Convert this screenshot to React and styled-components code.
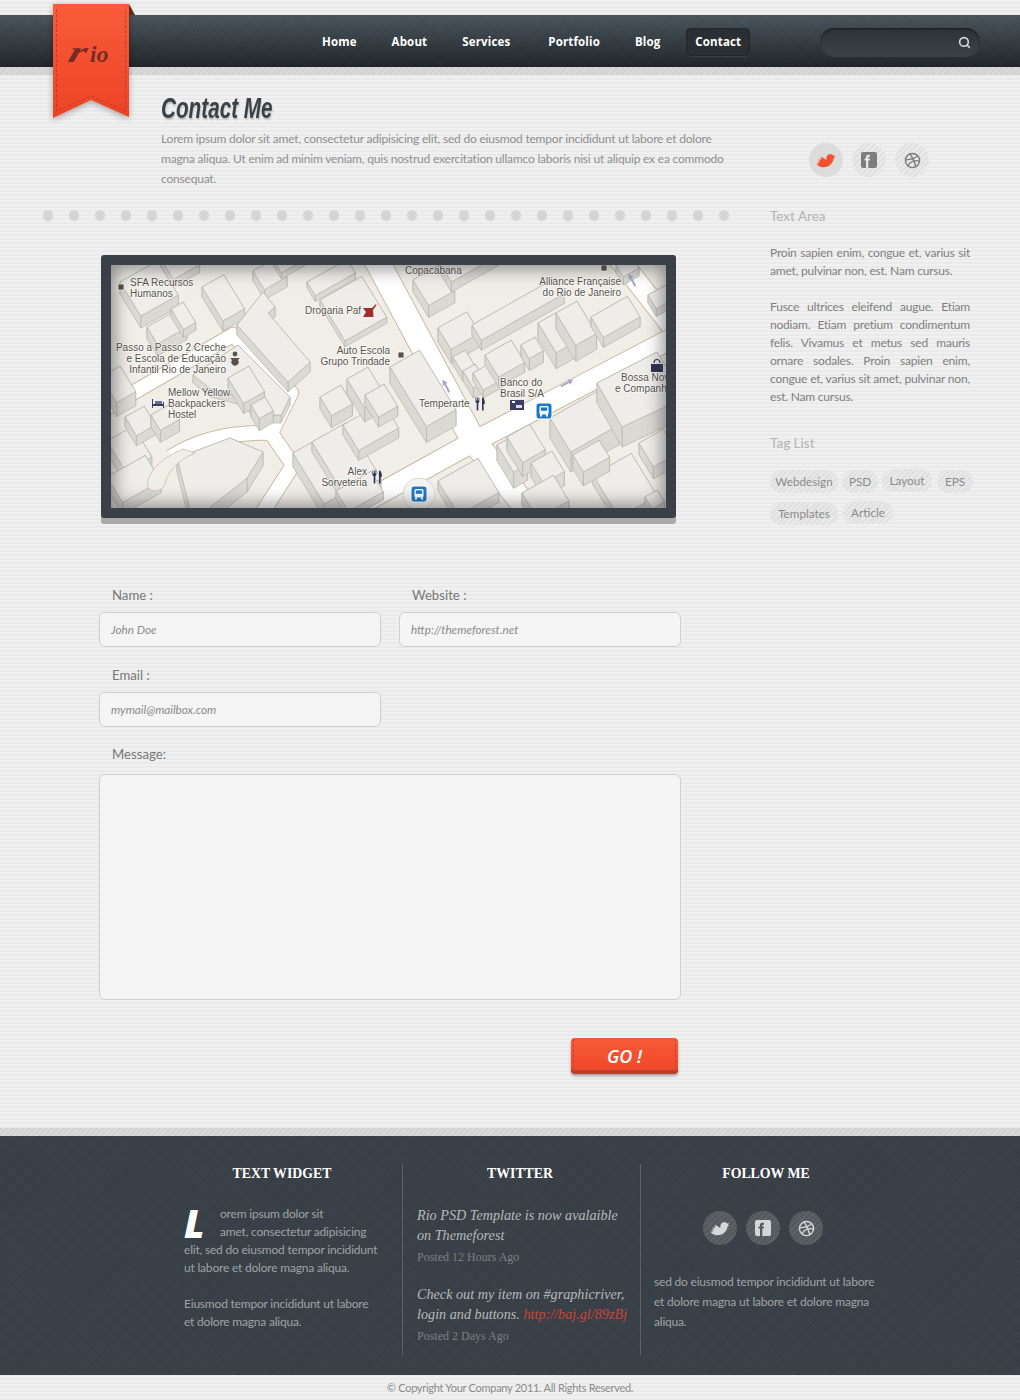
import React from 'react';
import styled, { createGlobalStyle, css } from 'styled-components';
import { FiDribbble, FiSearch } from 'react-icons/fi';

const bodyFont = `Lato, 'Open Sans', sans-serif`;
const serifFont = `'Liberation Serif', serif`;

const GlobalStyle = createGlobalStyle`
  html, body {
    margin: 0;
    padding: 0;
  }
  body {
    background-color: #eeeeee;
    background-image: repeating-linear-gradient(0deg, #eaeaea 0, #eaeaea 2px, #f0f0f0 2px, #f0f0f0 4px);
    font-family: ${bodyFont};
    color: #8c8c8c;
  }
  * { box-sizing: border-box; }
`;

const diagonal = (a, b) => css`
  background-image: repeating-linear-gradient(135deg, ${a} 0, ${a} 2px, ${b} 2px, ${b} 4px);
`;

const hatch = `
  repeating-linear-gradient(45deg, rgba(0, 0, 0, 0.05) 0, rgba(0, 0, 0, 0.05) 1px, transparent 1px, transparent 3px),
  repeating-linear-gradient(-45deg, rgba(0, 0, 0, 0.05) 0, rgba(0, 0, 0, 0.05) 1px, transparent 1px, transparent 3px)
`;

const Page = styled.div`
  width: 1020px;
  height: 1400px;
  padding-top: 15px;
  display: flex;
  flex-direction: column;
  overflow: hidden;
`;

const Header = styled.header`
  position: relative;
  height: 52px;
  flex: none;
  background: ${hatch}, linear-gradient(#4d5860, #22272b);
  display: flex;
  align-items: center;
  padding-left: 304px;
`;

const Ribbon = styled.a`
  position: absolute;
  left: 53px;
  top: -11px;
  width: 76px;
  height: 114px;
  filter: drop-shadow(0 2px 3px rgba(0, 0, 0, 0.3));
`;

const Fold = styled.div`
  position: absolute;
  left: 129px;
  top: -11px;
  width: 6px;
  height: 11px;
  background: #5e2a22;
  clip-path: polygon(0 0, 100% 100%, 0 100%);
`;

const LogoText = styled.text`
  font-family: ${serifFont};
  font-style: italic;
  font-weight: 700;
  fill: #742d24;
`;

const Nav = styled.nav`
  display: flex;
  align-items: center;
  width: 462px;
`;

const NavItem = styled.a`
  font-family: 'Open Sans', sans-serif;
  font-size: 11.5px;
  font-weight: 700;
  letter-spacing: 0.15px;
  line-height: 28px;
  height: 28px;
  margin-top: 2px;
  color: #ffffff;
  margin-left: ${p => p.$gap}px;
  ${p => p.$active && css`
    padding: 0 9px;
    background: #2a2f33;
    border-radius: 5px;
    box-shadow: inset 0 0 2px rgba(0, 0, 0, 0.6), 0 1px 0 rgba(255, 255, 255, 0.08);
  `}
`;

const Search = styled.div`
  width: 160px;
  height: 28px;
  margin-left: 54px;
  margin-top: 2px;
  border-radius: 14px;
  background: linear-gradient(#2d3236, #3b4248);
  box-shadow: inset 0 1px 2px rgba(0, 0, 0, 0.5), 0 1px 0 rgba(255, 255, 255, 0.08);
  display: flex;
  align-items: center;
  justify-content: flex-end;
  padding-right: 9px;
  color: #d6d8d9;
  font-size: 13px;
`;

const Band = styled.div`
  height: 8px;
  flex: none;
  ${diagonal('#d2d2d2', '#dadada')}
`;

const Intro = styled.section`
  display: flex;
  padding: 17px 0 0 161px;
  height: 135px;
  flex: none;
`;

const IntroText = styled.div`
  width: 648px;
`;

const Title = styled.h1`
  margin: 0;
  font-family: 'Liberation Sans', sans-serif;
  font-style: italic;
  font-weight: 700;
  font-size: 30px;
  line-height: 32px;
  color: #3a4248;
  text-shadow: 1px 2px 2px rgba(0, 0, 0, 0.18);
  transform: scaleX(0.69);
  transform-origin: left center;
`;

const Lead = styled.p`
  margin: 5px 0 0;
  font-size: 12px;
  letter-spacing: -0.2px;
  line-height: 20px;
  color: #8f8f8f;
  white-space: nowrap;
`;

const SocialRow = styled.div`
  display: flex;
  gap: ${p => p.$gap}px;
  margin-top: ${p => p.$top || 0}px;
  margin-left: ${p => p.$left || 0}px;
`;

const SocialLink = styled.a`
  width: 34px;
  height: 34px;
  border-radius: 50%;
  display: flex;
  align-items: center;
  justify-content: center;
  font-size: ${p => p.$size || 17}px;
  ${p => p.$dark
    ? css`
      color: #d4d6d7;
      ${diagonal('#55595d', '#5e6266')}
    `
    : p.$active
      ? css`
        color: #f4502f;
        background: #dcdcdc;
      `
      : css`
        color: #7d7d7d;
        ${diagonal('#e0e0e0', '#ebebeb')}
      `}
`;

const Content = styled.div`
  display: flex;
  flex: none;
  height: 918px;
`;

const LeftColumn = styled.div`
  width: 770px;
  flex: none;
`;

const Dots = styled.div`
  display: flex;
  gap: 16px;
  padding-left: 43px;
  height: 10px;
`;

const Dot = styled.span`
  width: 10px;
  height: 11px;
  flex: none;
  border-radius: 50%;
  background: #d4d5d6;
`;

const MapFrame = styled.div`
  position: relative;
  width: 575px;
  height: 263px;
  margin: 35px 0 0 101px;
  border: 10px solid #394047;
  border-radius: 3px;
  box-shadow: 0 6px 0 #a9a9a9;
  background: #f1eee8;
`;

const MapSvg = styled.svg`
  display: block;
  width: 555px;
  height: 243px;
`;

const Vignette = styled.div`
  position: absolute;
  inset: 0;
  box-shadow: inset 0 0 18px 3px rgba(40, 40, 40, 0.55);
  pointer-events: none;
`;

const MapLabel = styled.text`
  font-family: 'Liberation Sans', sans-serif;
  font-size: 10px;
  fill: #57524c;
  stroke: #ffffff;
  stroke-width: 1.6px;
  stroke-opacity: 0.7;
  paint-order: stroke;
`;

const Form = styled.form`
  width: 582px;
  margin: 68px 0 0 99px;
  display: grid;
  grid-template-columns: 282px 282px;
  column-gap: 18px;
`;

const Field = styled.div`
  grid-column: ${p => (p.$wide ? '1 / 3' : 'auto')};
  margin-bottom: ${p => p.$bottom ?? 19}px;
`;

const Label = styled.label`
  display: block;
  font-size: 13.2px;
  line-height: 18px;
  height: 18px;
  margin: 0 0 ${p => p.$gap || 8}px 13px;
  color: #777777;
`;

const Input = styled.div`
  height: 35px;
  width: 282px;
  line-height: 33px;
  padding: 0 11px;
  background: #f5f5f5;
  border: 1px solid #cfcfcf;
  border-radius: 6px;
  font-style: italic;
  font-size: 11.7px;
  color: #8a8a8a;
`;

const TextArea = styled.div`
  height: 226px;
  background: #f5f5f5;
  border: 1px solid #cfcfcf;
  border-radius: 6px;
`;

const GoButton = styled.button`
  display: block;
  position: relative;
  width: 107px;
  height: 36px;
  margin: 38px 0 0 571px;
  padding: 0;
  border: 0;
  border-radius: 4px;
  background: linear-gradient(#f85a39, #ee4727);
  box-shadow: inset 0 -4px 0 #b9402b, 0 2px 3px rgba(0, 0, 0, 0.3);
  font-family: 'Open Sans', sans-serif;
  font-style: italic;
  font-weight: 600;
  font-size: 18px;
  color: #ffffff;
  &::before,
  &::after {
    content: '';
    position: absolute;
    top: 1px;
    bottom: 1px;
    border-left: 1px dashed #bb452f;
  }
  &::before { left: 2px; }
  &::after { right: 2px; }
`;

const Sidebar = styled.aside`
  width: 200px;
  flex: none;
  margin-top: -4px;
`;

const SideTitle = styled.h3`
  margin: 0;
  font-size: 13.5px;
  font-weight: 400;
  line-height: 20px;
  color: #b4b4b4;
`;

const SideText = styled.p`
  margin: ${p => p.$top}px 0 0;
  font-size: 12px;
  letter-spacing: -0.2px;
  line-height: 18px;
  color: #7f7f7f;
  text-align: justify;
`;

const TagTitle = styled(SideTitle)`
  margin-top: 27px;
`;

const Tags = styled.div`
  display: flex;
  flex-wrap: wrap;
  width: 205px;
  margin-top: 17px;
  row-gap: 9px;
`;

const Tag = styled.a`
  height: 23px;
  line-height: 23px;
  border-radius: 12px;
  width: ${p => p.$w}px;
  margin-right: ${p => p.$gap}px;
  margin-top: ${p => (p.$lift ? -1 : 0)}px;
  margin-bottom: ${p => (p.$lift ? 1 : 0)}px;
  text-align: center;
  font-size: 11.7px;
  color: #8b8b8b;
  ${diagonal('#e0e0e0', '#e9e9e9')}
`;

const BottomBand = styled(Band)`
  margin-top: auto;
`;

const Footer = styled.footer`
  height: 239px;
  flex: none;
  background: ${hatch}, #3b4249;
  display: flex;
  padding: 28px 0 0 184px;
`;

const FooterCol = styled.div`
  width: ${p => p.$w}px;
  height: 191px;
  flex: none;
  padding-right: ${p => p.$pad}px;
  margin-right: ${p => p.$margin}px;
  border-right: ${p => (p.$line ? '1px solid #5b6268' : '0')};
`;

const FooterTitle = styled.h4`
  margin: 0;
  font-family: ${serifFont};
  font-size: 13.8px;
  font-weight: 700;
  line-height: 20px;
  text-transform: uppercase;
  text-align: center;
  color: #ffffff;
  width: ${p => p.$w}px;
`;

const FooterText = styled.p`
  margin: ${p => p.$top}px 0 0;
  font-size: 12px;
  letter-spacing: -0.2px;
  line-height: ${p => p.$line || 18}px;
  color: #a0a3a6;
`;

const DropCap = styled.span`
  float: left;
  font-family: 'Open Sans', sans-serif;
  font-style: italic;
  font-weight: 800;
  font-size: 39px;
  line-height: 36px;
  letter-spacing: 0;
  width: 36px;
  color: #ffffff;
`;

const Tweet = styled.p`
  margin: ${p => p.$top}px 0 0;
  font-family: ${serifFont};
  font-style: italic;
  font-size: 14.2px;
  line-height: 20px;
  color: #b7babc;
  white-space: nowrap;
`;

const TweetLink = styled.a`
  color: #cf4436;
`;

const Posted = styled.p`
  margin: 3px 0 0;
  font-family: ${serifFont};
  font-size: 12px;
  line-height: 18px;
  color: #7c8185;
`;

const Copyright = styled.div`
  height: 25px;
  flex: none;
  line-height: 25px;
  text-align: center;
  font-size: 11px;
  letter-spacing: -0.28px;
  color: #8a8a8a;
`;

// map grid directions, taken from the two main roads
const d1 = [0.52, 0.85];
const d2 = [0.87, -0.49];

// block from its west corner: u runs down-right, v runs up-right
const block = (x, y, u, v, h) => ({
  h,
  p: [
    [x, y],
    [x + v * d2[0], y + v * d2[1]],
    [x + v * d2[0] + u * d1[0], y + v * d2[1] + u * d1[1]],
    [x + u * d1[0], y + u * d1[1]],
  ],
});

const buildings = [
  // left of the map
  block(9, 17, 40, 43, 12),
  block(50, -6, 24, 30, 8),
  block(91, 22, 40, 25, 10),
  block(36, 62, 20, 34, 12),
  block(60, 44, 24, 14, 8),
  block(142, 6, 22, 26, 10),
  block(-10, 112, 30, 22, 14),
  { h: 10, p: [[126, 60], [152, 27], [164, 42], [157, 48], [199, 97], [177, 117]] },
  block(209, 35, 48, 48, 6),
  block(196, 17, 16, 46, 6),
  block(163, -4, 14, 34, 6),
  { h: 8, p: [[82, 110], [127, 80], [179, 132], [170, 150], [150, 150], [130, 132], [100, 124]] },
  block(117, 113, 30, 24, 10),
  block(140, 140, 16, 16, 12),
  block(-4, 176, 36, 30, 12),
  block(14, 152, 22, 22, 10),
  block(40, 150, 18, 22, 12),
  block(-4, 212, 30, 44, 12),
  { h: 14, p: [[66, 193], [119, 173], [152, 187], [136, 213], [92, 248], [80, 248]] },
  // between the curved road and the main road
  block(182, 188, 60, 24, 14),
  block(201, 177, 66, 40, 10),
  block(232, 160, 30, 46, 10),
  block(209, 132, 22, 24, 12),
  block(236, 114, 34, 24, 14),
  block(254, 130, 26, 22, 10),
  block(279, 102, 70, 34, 16),
  block(225, 226, 24, 40, 8),
  // right of the main road
  block(302, 15, 30, 30, 12),
  block(330, 0, 20, 70, 10),
  block(327, 63, 25, 33, 14),
  block(361, 60, 18, 95, 10),
  block(342, 92, 20, 14, 8),
  block(352, 106, 20, 14, 10),
  block(362, 108, 20, 22, 8),
  block(374, 90, 26, 30, 10),
  block(410, 80, 16, 16, 12),
  block(427, 58, 35, 20, 16),
  block(445, 48, 38, 24, 16),
  block(480, 52, 24, 42, 10),
  block(505, 0, 14, 18, 8),
  block(537, 30, 16, 20, 8),
  // below the second road
  block(439, 153, 40, 55, 20),
  { h: 20, p: [[486, 118], [546, 87], [558, 107], [558, 140], [511, 162]] },
  block(386, 180, 32, 16, 16),
  block(396, 172, 30, 26, 14),
  block(420, 198, 24, 24, 14),
  block(411, 228, 30, 36, 12),
  block(482, 210, 50, 44, 10),
  block(462, 190, 20, 30, 14),
  block(528, 178, 28, 28, 12),
  block(534, 232, 14, 14, 8),
  block(327, 216, 40, 46, 10),
];

const Building = ({ p, h }) => (
  <g stroke="#b8b4ac" strokeWidth="0.7">
    {p.map((pt, i) => {
      const next = p[(i + 1) % p.length];
      return (
        <polygon
          key={i}
          fill="#dbd9d4"
          points={`${pt[0]},${pt[1]} ${next[0]},${next[1]} ${next[0]},${next[1] + h} ${pt[0]},${pt[1] + h}`}
        />
      );
    })}
    <polygon fill="#eeedea" points={p.map(pt => pt.join(',')).join(' ')} />
  </g>
);

const BusIcon = ({ x, y }) => (
  <g transform={`translate(${x} ${y})`}>
    <rect x="-8" y="-8" width="16" height="16" rx="3" fill="#1f78c4" stroke="#ffffff" strokeWidth="1" />
    <rect x="-4.5" y="-5" width="9" height="8.5" rx="1.5" fill="#ffffff" />
    <rect x="-3.2" y="-3.6" width="6.4" height="3.4" fill="#1f78c4" />
    <rect x="-4" y="3.5" width="2" height="2" fill="#ffffff" />
    <rect x="2" y="3.5" width="2" height="2" fill="#ffffff" />
  </g>
);

const ForkIcon = ({ x, y }) => (
  <g transform={`translate(${x} ${y})`} fill="#2f3454">
    <path d="M-4.5 -6.5 h0.8 v3 h0.7 v-3 h0.8 v3 h0.7 v-3 h0.8 v4.5 l-1 1.2 v7.3 h-1.6 v-7.3 l-1.2 -1.2 z" />
    <path d="M2 -6.5 c2 0 2.8 2 2.8 5 v1.5 h-1.2 v6.5 h-1.6 z" />
  </g>
);

const Square = ({ x, y }) => (
  <rect x={x - 3} y={y - 3} width="6" height="6" fill="#5d5146" stroke="#ffffff" strokeWidth="0.8" />
);

const Arrow = ({ x, y, angle }) => (
  <path
    transform={`translate(${x} ${y}) rotate(${angle})`}
    d="M0 -7 L3 -2 L1 -2 L1 7 L-1 7 L-1 -2 L-3 -2 Z"
    fill="#a7a9c6"
  />
);

const BirdIcon = () => (
  <svg viewBox="0 0 21 15" width="20" height="15" fill="currentColor">
    <path d="M13.5 1 C15.5 0.5 17 1 18 2.2 L20 1.8 L18.8 3.6 L20.5 4 L18.6 5.2 C18 10.5 13 15 7.5 14.6 C4.5 14.4 2 13 0.5 10.8 L3.5 10.6 L1.5 9 L4.5 8.4 L2.5 6.6 L6 6.2 L4.5 3.8 L8 5 L9.6 6.4 L11 6.4 C10.6 4 11.6 1.6 13.5 1 Z" />
  </svg>
);

const FacebookIcon = ({ letter }) => (
  <svg viewBox="0 0 16 16" width="16" height="16">
    <rect width="16" height="16" rx="2" fill="currentColor" />
    <path
      d="M5 16 V8.5 H3.5 V6.5 H5 V5 C5 3.4 6 2.8 7.4 2.8 H9 V4.8 H8 C7.5 4.8 7.3 5 7.3 5.4 V6.5 H9 L8.7 8.5 H7.3 V16 Z"
      fill={letter}
    />
  </svg>
);

const labels = [
  { x: 19, y: 21, t: 'SFA Recursos' },
  { x: 19, y: 32, t: 'Humanos' },
  { x: 194, y: 49, t: 'Drogaria Paf' },
  { x: 115, y: 86, a: 'end', t: 'Passo a Passo 2 Creche' },
  { x: 115, y: 97, a: 'end', t: 'e Escola de Educação' },
  { x: 115, y: 108, a: 'end', t: 'Infantil Rio de Janeiro' },
  { x: 279, y: 89, a: 'end', t: 'Auto Escola' },
  { x: 279, y: 100, a: 'end', t: 'Grupo Trindade' },
  { x: 57, y: 131, t: 'Mellow Yellow' },
  { x: 57, y: 142, t: 'Backpackers' },
  { x: 57, y: 153, t: 'Hostel' },
  { x: 256, y: 210, a: 'end', t: 'Alex' },
  { x: 256, y: 221, a: 'end', t: 'Sorveteria' },
  { x: 294, y: 9, t: 'Copacabana' },
  { x: 510, y: 20, a: 'end', t: 'Alliance Française' },
  { x: 510, y: 31, a: 'end', t: 'do Rio de Janeiro' },
  { x: 308, y: 142, t: 'Temperarte' },
  { x: 389, y: 121, t: 'Banco do' },
  { x: 389, y: 132, t: 'Brasil S/A' },
  { x: 510, y: 116, t: 'Bossa Nov' },
  { x: 504, y: 127, t: 'e Companh' },
];

const StreetMap = () => (
  <MapSvg viewBox="0 0 555 243">
    <rect width="555" height="243" fill="#f1eee8" />
    <g fill="none" strokeLinejoin="round" strokeLinecap="butt">
      <g stroke="#c9bca6">
        <path strokeWidth="26" d="M260 -15 L362 175 L425 255" />
        <path strokeWidth="22" d="M230 250 L362 177 L560 74" />
        <path strokeWidth="22" d="M505 -10 L560 60" />
        <path strokeWidth="16" d="M-6 144 L122 70 L180 128 L160 168 L182 200 L150 250" />
        <path strokeWidth="16" d="M60 192 Q100 166 160 168" />
      </g>
      <g stroke="#ffffff">
        <path strokeWidth="24" d="M260 -15 L362 175 L425 255" />
        <path strokeWidth="20" d="M230 250 L362 177 L560 74" />
        <path strokeWidth="20" d="M505 -10 L560 60" />
        <path strokeWidth="14" d="M-6 144 L122 70 L180 128 L160 168 L182 200 L150 250" />
        <path strokeWidth="14" d="M60 192 Q100 166 160 168" />
      </g>
    </g>
    {buildings.map((b, i) => (
      <Building key={i} p={b.p} h={b.h} />
    ))}
    <path d="M42 205 Q30 225 44 226 Q54 226 56 212 Q64 196 84 188 L72 184 Q52 192 42 205 Z" fill="#f1eee8" stroke="#c9bca6" strokeWidth="0.8" />
    <circle cx="308" cy="229" r="16" fill="#f4f3f0" stroke="#cfcdc7" strokeWidth="0.7" />
    <Arrow x={335} y={121} angle={-28} />
    <Arrow x={456} y={118} angle={62} />
    <Arrow x={521} y={15} angle={-28} />
    {labels.map(l => (
      <MapLabel key={l.t} x={l.x} y={l.y} textAnchor={l.a || 'start'}>{l.t}</MapLabel>
    ))}
    <Square x={10} y={22} />
    <Square x={290} y={90} />
    <Square x={493} y={3} />
    <g transform="translate(258 46)" fill="#a52a2a">
      <path d="M-6 -3 H3 L7 -7 L7.5 -6 L4 -1 L4.5 6 H-6 L-3 1 Z" />
    </g>
    <g transform="translate(124 93)" fill="#5b5148">
      <circle cy="-4" r="2.4" />
      <path d="M-5 0 H5 L3 2 A3.6 3.6 0 1 1 -3 2 Z" />
    </g>
    <g transform="translate(47 138)" fill="#3b3f66">
      <path d="M-6 -4 H-5 V1 H5 V-1 H6 V5 H5 V3 H-5 V5 H-6 Z" />
      <rect x="-3" y="-2" width="7" height="3" fill="#6a6e90" />
    </g>
    <ForkIcon x={266} y={212} />
    <ForkIcon x={369} y={139} />
    <g transform="translate(406 140)">
      <rect x="-7" y="-5" width="14" height="10" fill="#3b3f66" />
      <rect x="-5" y="-4" width="3" height="2" fill="#ffffff" />
      <rect x="-1" y="0" width="6" height="3" fill="#d9dae4" />
    </g>
    <BusIcon x={433} y={146} />
    <BusIcon x={308} y={229} />
    <g transform="translate(546 100)">
      <path d="M-3 -2 A3 3.5 0 0 1 3 -2" fill="none" stroke="#2f3454" strokeWidth="1.2" />
      <rect x="-6" y="-1" width="12" height="8" fill="#2f3454" />
    </g>
  </MapSvg>
);

const Rio = () => (
  <svg viewBox="0 0 76 114" width="76" height="114">
    <defs>
      <linearGradient id="ribbonFill" x1="0" y1="0" x2="0" y2="1">
        <stop offset="0" stopColor="#f95c3b" />
        <stop offset="1" stopColor="#ec4325" />
      </linearGradient>
    </defs>
    <polygon points="0,0 76,0 76,113 38,96 0,114" fill="url(#ribbonFill)" />
    <path
      d="M3.5 5 V107 L38 92 L72.5 107 V5"
      fill="none"
      stroke="#b13a24"
      strokeWidth="0.8"
      strokeDasharray="3 2"
    />
    <g transform="translate(14 58) skewX(-16) scale(1.5 1)">
      <LogoText fontSize="30">r</LogoText>
    </g>
    <LogoText x="37" y="58" fontSize="24">io</LogoText>
  </svg>
);

const App = () => {
  const dots = Array.from({ length: 27 }, (_, i) => i);
  return (
    <Page>
      <GlobalStyle />
      <Header>
        <Ribbon><Rio /></Ribbon>
        <Fold />
        <Nav>
          <NavItem $gap={18}>Home</NavItem>
          <NavItem $gap={35}>About</NavItem>
          <NavItem $gap={35}>Services</NavItem>
          <NavItem $gap={38}>Portfolio</NavItem>
          <NavItem $gap={35}>Blog</NavItem>
          <NavItem $gap={26} $active>Contact</NavItem>
        </Nav>
        <Search><FiSearch strokeWidth={3} /></Search>
      </Header>
      <Band />
      <Intro>
        <IntroText>
          <Title>Contact Me</Title>
          <Lead>
            Lorem ipsum dolor sit amet, consectetur adipisicing elit, sed do eiusmod tempor incididunt ut labore et dolore<br />
            magna aliqua. Ut enim ad minim veniam, quis nostrud exercitation ullamco laboris nisi ut aliquip ex ea commodo<br />
            consequat.
          </Lead>
        </IntroText>
        <SocialRow $gap={9} $top={51}>
          <SocialLink $active><BirdIcon /></SocialLink>
          <SocialLink><FacebookIcon letter="#e8e8e8" /></SocialLink>
          <SocialLink><FiDribbble /></SocialLink>
        </SocialRow>
      </Intro>
      <Content>
        <LeftColumn>
          <Dots>
            {dots.map(d => <Dot key={d} />)}
          </Dots>
          <MapFrame>
            <StreetMap />
            <Vignette />
          </MapFrame>
          <Form>
            <Field>
              <Label>Name :</Label>
              <Input>John Doe</Input>
            </Field>
            <Field>
              <Label>Website :</Label>
              <Input>http://themeforest.net</Input>
            </Field>
            <Field $wide $bottom={18}>
              <Label>Email :</Label>
              <Input>mymail@mailbox.com</Input>
            </Field>
            <Field $wide $bottom={0}>
              <Label $gap={11}>Message:</Label>
              <TextArea />
            </Field>
          </Form>
          <GoButton>GO !</GoButton>
        </LeftColumn>
        <Sidebar>
          <SideTitle>Text Area</SideTitle>
          <SideText $top={18}>Proin sapien enim, congue et, varius sit amet, pulvinar non, est. Nam cursus.</SideText>
          <SideText $top={18}>Fusce ultrices eleifend augue. Etiam nodiam. Etiam pretium condimentum felis. Vivamus et metus sed mauris ornare sodales. Proin sapien enim, congue et, varius sit amet, pulvinar non, est. Nam cursus.</SideText>
          <TagTitle>Tag List</TagTitle>
          <Tags>
            <Tag $w={68} $gap={4}>Webdesign</Tag>
            <Tag $w={36} $gap={4}>PSD</Tag>
            <Tag $w={50} $gap={5} $lift>Layout</Tag>
            <Tag $w={36} $gap={0}>EPS</Tag>
            <Tag $w={68} $gap={5}>Templates</Tag>
            <Tag $w={50} $gap={0} $lift>Article</Tag>
          </Tags>
        </Sidebar>
      </Content>
      <BottomBand />
      <Footer>
        <FooterCol $w={219} $pad={18} $margin={14} $line>
          <FooterTitle $w={196}>Text Widget</FooterTitle>
          <FooterText $top={21}>
            <DropCap>L</DropCap>
            orem ipsum dolor sit<br />
            amet, consectetur adipisicing elit, sed do eiusmod tempor incididunt ut labore et dolore magna aliqua.
          </FooterText>
          <FooterText $top={18}>Eiusmod tempor incididunt ut labore<br />et dolore magna aliqua.</FooterText>
        </FooterCol>
        <FooterCol $w={224} $pad={12} $margin={13} $line>
          <FooterTitle $w={206}>Twitter</FooterTitle>
          <Tweet $top={21}>Rio PSD Template is now avalaible<br />on Themeforest</Tweet>
          <Posted>Posted 12 Hours Ago</Posted>
          <Tweet $top={18}>Check out my item on #graphicriver,<br />login and buttons. <TweetLink>http://baj.gl/89zBj</TweetLink></Tweet>
          <Posted>Posted 2 Days Ago</Posted>
        </FooterCol>
        <FooterCol $w={230} $pad={0} $margin={0}>
          <FooterTitle $w={224}>Follow Me</FooterTitle>
          <SocialRow $gap={9} $top={27} $left={49}>
            <SocialLink $dark><BirdIcon /></SocialLink>
            <SocialLink $dark><FacebookIcon letter="#555a5e" /></SocialLink>
            <SocialLink $dark><FiDribbble /></SocialLink>
          </SocialRow>
          <FooterText $top={27} $line={20}>
            sed do eiusmod tempor incididunt ut labore<br />
            et dolore magna ut labore et dolore magna<br />
            aliqua.
          </FooterText>
        </FooterCol>
      </Footer>
      <Copyright>© Copyright Your Company 2011. All Rights Reserved.</Copyright>
    </Page>
  );
};

export default App;
